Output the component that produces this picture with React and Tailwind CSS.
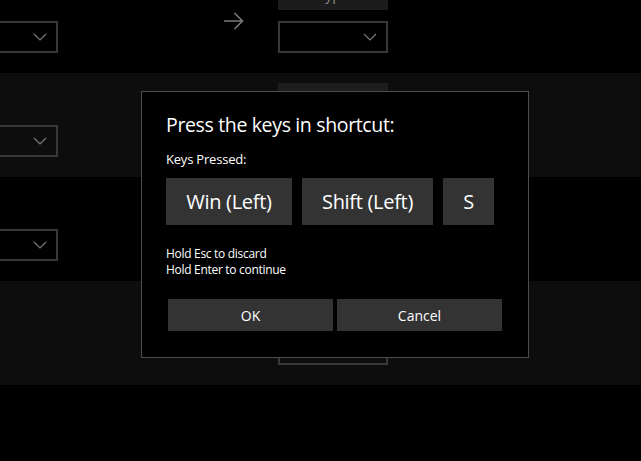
import React from "react";

const font = { fontFamily: '"Open Sans", "Noto Sans", sans-serif' };

function Chevron() {
  return (
    <svg width="14" height="8" viewBox="0 0 14 8" className="shrink-0">
      <path d="M1 1 L7 7 L13 1" fill="none" stroke="#7a7a7a" strokeWidth="1.2" />
    </svg>
  );
}

function Dropdown({ className = "" }) {
  return (
    <div className={`h-[32px] w-[110px] border-2 border-[#383838] flex items-center justify-end pr-[9px] ${className}`}>
      <Chevron />
    </div>
  );
}

function Arrow() {
  return (
    <svg width="21" height="18" viewBox="0 0 21 18">
      <path d="M1 9 H19.5 M11.5 1 L19.5 9 L11.5 17" fill="none" stroke="#7a7a7a" strokeWidth="1.6" />
    </svg>
  );
}

function Row({ bg, left = true, label = "" }) {
  return (
    <div className={`h-[104px] flex ${bg}`}>
      <div className="w-[58px] relative">
        {left && <Dropdown className="absolute right-0 top-[52px]" />}
      </div>
      <div className="w-[220px] flex justify-start items-start pt-[43px] pl-[165px]">
        <Arrow />
      </div>
      <div className="w-[110px] flex flex-col">
        <div className="mt-[10px] h-[31px] bg-[#1c1c1c] flex items-center justify-center text-[14px] text-[#8a8a8a]">
          {label}
        </div>
        <Dropdown className="mt-[11px]" />
      </div>
    </div>
  );
}

export default function App() {
  return (
    <div className="relative w-[641px] h-[461px] bg-black overflow-hidden" style={font}>
      <div className="mt-[-31px] flex flex-col">
        <Row bg="bg-black" label="Type" />
        <Row bg="bg-[#0d0d0d]" />
        <Row bg="bg-black" />
        <Row bg="bg-[#0d0d0d]" left={false} />
      </div>

      <div className="absolute left-[141px] top-[91px] w-[388px] h-[267px] border border-[#4d4d4d] bg-black px-[24px] pt-[19px] text-white">
        <div className="text-[19.5px] leading-[28px] tracking-[-0.35px]">Press the keys in shortcut:</div>
        <div className="mt-[10px] text-[13px] leading-[20px] tracking-[-0.2px]">Keys Pressed:</div>
        <div className="mt-[9px] flex gap-[10px] text-[20px] tracking-[-0.3px]">
          <div className="w-[126px] h-[47px] bg-[#333333] flex items-center justify-center">Win (Left)</div>
          <div className="w-[131px] h-[47px] bg-[#333333] flex items-center justify-center">Shift (Left)</div>
          <div className="w-[51px] h-[47px] bg-[#333333] flex items-center justify-center">S</div>
        </div>
        <div className="mt-[21px] text-[12px] leading-[16px] tracking-[-0.3px]">
          <div>Hold Esc to discard</div>
          <div>Hold Enter to continue</div>
        </div>
        <div className="mt-[21px] ml-[2px] flex gap-[4px] text-[14px]">
          <div className="w-[165px] h-[32px] bg-[#333333] flex items-center justify-center">OK</div>
          <div className="w-[165px] h-[32px] bg-[#333333] flex items-center justify-center">Cancel</div>
        </div>
      </div>
    </div>
  );
}
